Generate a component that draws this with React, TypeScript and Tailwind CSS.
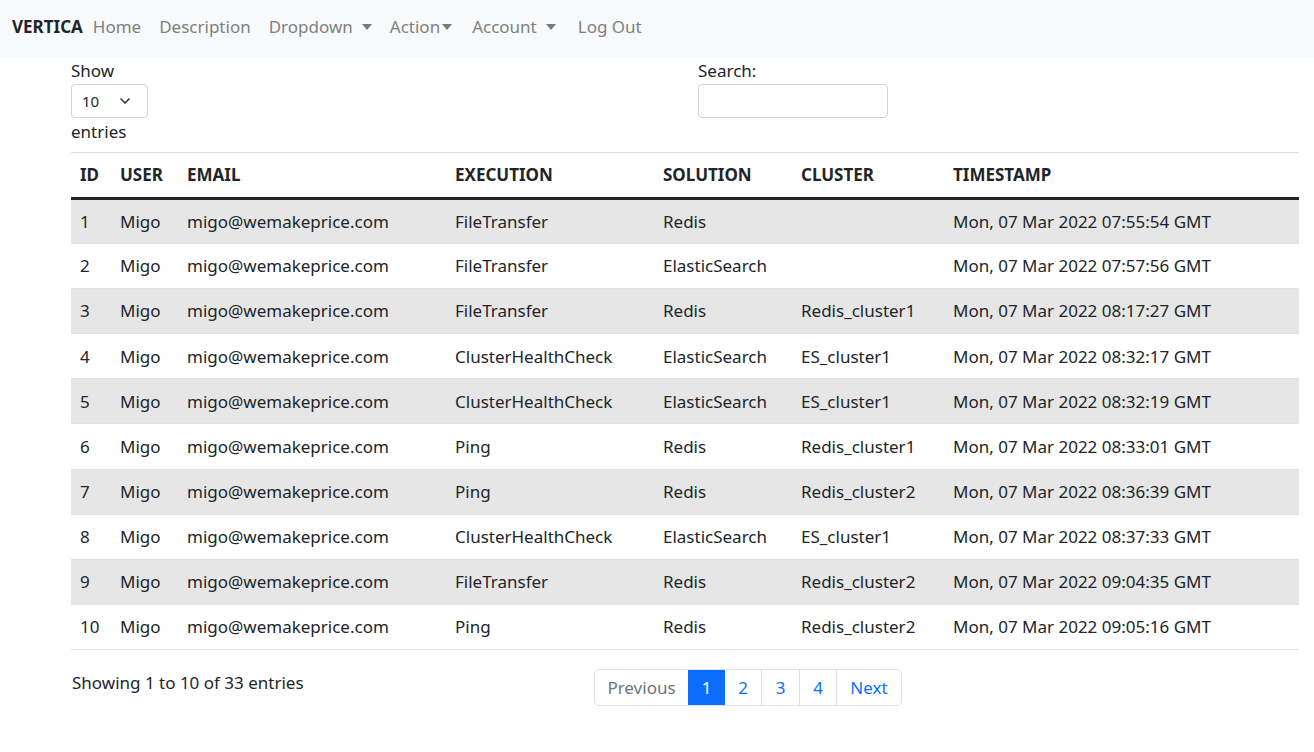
import { ChevronDown } from 'lucide-react';

const rows = [
  ['1', 'FileTransfer', 'Redis', '', '07:55:54'],
  ['2', 'FileTransfer', 'ElasticSearch', '', '07:57:56'],
  ['3', 'FileTransfer', 'Redis', 'Redis_cluster1', '08:17:27'],
  ['4', 'ClusterHealthCheck', 'ElasticSearch', 'ES_cluster1', '08:32:17'],
  ['5', 'ClusterHealthCheck', 'ElasticSearch', 'ES_cluster1', '08:32:19'],
  ['6', 'Ping', 'Redis', 'Redis_cluster1', '08:33:01'],
  ['7', 'Ping', 'Redis', 'Redis_cluster2', '08:36:39'],
  ['8', 'ClusterHealthCheck', 'ElasticSearch', 'ES_cluster1', '08:37:33'],
  ['9', 'FileTransfer', 'Redis', 'Redis_cluster2', '09:04:35'],
  ['10', 'Ping', 'Redis', 'Redis_cluster2', '09:05:16'],
];

const cols = ['ID', 'USER', 'EMAIL', 'EXECUTION', 'SOLUTION', 'CLUSTER', 'TIMESTAMP'];
const widths = ['w-[40px]', 'w-[67px]', 'w-[268px]', 'w-[208px]', 'w-[138px]', 'w-[152px]', 'w-auto'];

function Caret() {
  return <span className="ml-[9px] inline-block h-0 w-0 border-x-[5px] border-t-[6px] border-x-transparent border-t-[#7a7a7a] align-middle" />;
}

export default function App() {
  return (
    <div className="min-h-screen bg-white font-['Noto_Sans',sans-serif] text-[17px] text-[#212529]">
      <nav className="flex h-[57px] items-center bg-[#f8f9fa] px-3 pb-[4px] text-[#808080]">
        <span className="mr-[10px] text-[17px] font-bold text-[#212529]">VERTICA</span>
        <div className="flex items-center gap-[18px]">
          <span>Home</span>
          <span>Description</span>
          <span className="flex items-center">Dropdown<Caret /></span>
          <span className="flex items-center">Action<span className="ml-[2px] inline-block h-0 w-0 border-x-[5px] border-t-[6px] border-x-transparent border-t-[#7a7a7a]" /></span>
          <span className="ml-[2px] flex items-center">Account<Caret /></span>
          <span className="ml-[4px]">Log Out</span>
        </div>
      </nav>

      <div className="mx-[71px] w-[1228px]">
        <div className="flex h-[95px]">
          <div className="w-[627px] leading-[27px]">
            <div>Show</div>
            <div className="flex h-[34px] w-[77px] items-center justify-between rounded-[4px] border border-[#ced4da] pl-[10px] pr-[14px] text-[15px]">
              <span>10</span>
              <ChevronDown size={16} strokeWidth={2.5} className="text-[#343a40]" />
            </div>
            <div>entries</div>
          </div>
          <div className="leading-[27px]">
            <div>Search:</div>
            <div className="h-[34px] w-[190px] rounded-[4px] border border-[#ced4da]" />
          </div>
        </div>

        <table className="w-full table-fixed border-collapse border-t border-[#dee2e6]">
          <thead>
            <tr className="h-[46px]">
              {cols.map((c, i) => (
                <th key={c} className={`${widths[i]} border-b-[3px] border-[#212529] px-[9px] text-left font-bold`}>{c}</th>
              ))}
            </tr>
          </thead>
          <tbody>
            {rows.map((r, i) => (
              <tr key={r[0]} className={`h-[45.1px] border-b border-[#dee2e6] ${i % 2 === 0 ? 'bg-[#e6e6e6]' : 'bg-white'}`}>
                <td className="px-[9px]">{r[0]}</td>
                <td className="px-[9px]">Migo</td>
                <td className="px-[9px]">migo@wemakeprice.com</td>
                <td className="px-[9px]">{r[1]}</td>
                <td className="px-[9px]">{r[2]}</td>
                <td className="px-[9px]">{r[3]}</td>
                <td className="px-[9px]">Mon, 07 Mar 2022 {r[4]} GMT</td>
              </tr>
            ))}
          </tbody>
        </table>

        <div className="flex items-start pt-[19px]">
          <div className="w-[523px] pl-px leading-[27px]">Showing 1 to 10 of 33 entries</div>
          <div className="flex h-[37px] overflow-hidden rounded-[5px] border border-[#dee2e6]">
            <span className="flex w-[93px] items-center justify-center text-[#6c757d]">Previous</span>
            <span className="flex w-[37px] items-center justify-center bg-[#0d6efd] text-white">1</span>
            <span className="flex w-[37px] items-center justify-center border-r border-[#dee2e6] text-[#0d6efd]">2</span>
            <span className="flex w-[38px] items-center justify-center border-r border-[#dee2e6] text-[#0d6efd]">3</span>
            <span className="flex w-[37px] items-center justify-center border-r border-[#dee2e6] text-[#0d6efd]">4</span>
            <span className="flex w-[64px] items-center justify-center text-[#0d6efd]">Next</span>
          </div>
        </div>
      </div>
    </div>
  );
}
